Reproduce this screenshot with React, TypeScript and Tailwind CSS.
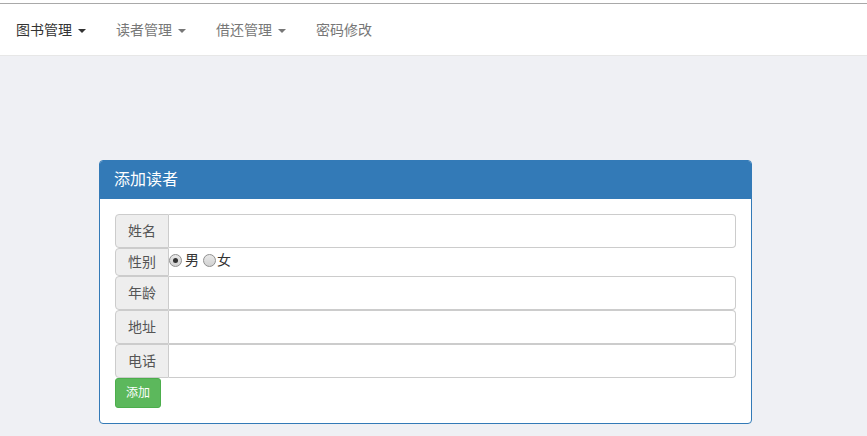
import React from 'react';

const font = { fontFamily: '"Helvetica Neue", "Liberation Sans", "Noto Sans CJK SC", sans-serif' };

function Caret({ dark }: { dark?: boolean }) {
  return (
    <span
      className={`ml-[6px] inline-block h-0 w-0 border-x-[4px] border-t-[4px] border-x-transparent align-middle ${
        dark ? 'border-t-[#333]' : 'border-t-[#777]'
      }`}
    />
  );
}

function Radio({ checked }: { checked?: boolean }) {
  return (
    <span className="inline-flex h-[13px] w-[13px] items-center justify-center rounded-full border border-[#8f8f8f] bg-gradient-to-b from-[#e8e8e8] to-[#d2d2d2]">
      {checked && <span className="h-[5px] w-[5px] rounded-full bg-[#333]" />}
    </span>
  );
}

function Field({ label }: { label: string }) {
  return (
    <div className="flex h-[34px]">
      <span className="flex w-[54px] items-center justify-center rounded-l-[4px] border border-[#ccc] bg-[#eee] text-[14px] text-[#555]">
        {label}
      </span>
      <input
        className="flex-1 rounded-r-[4px] border border-l-0 border-[#ccc] bg-white px-3 text-[14px] outline-none"
        type="text"
      />
    </div>
  );
}

export default function App() {
  const navItems = [
    { label: '图书管理', caret: true, active: true },
    { label: '读者管理', caret: true },
    { label: '借还管理', caret: true },
    { label: '密码修改', caret: false },
  ];

  return (
    <div className="min-h-[436px] bg-[#eff0f4]" style={font}>
      {/* navbar */}
      <div className="bg-white">
        <div className="h-[3px]" />
        <div className="h-px bg-[#a9a9a9]" />
        <nav className="flex h-[52px] items-center border-b border-[#e7e7e7] pl-px pt-[2px]">
          {navItems.map((item) => (
            <a
              key={item.label}
              className={`flex items-center px-[15px] text-[14px] ${item.active ? 'text-[#333]' : 'text-[#777]'}`}
            >
              {item.label}
              {item.caret && <Caret dark={item.active} />}
            </a>
          ))}
        </nav>
      </div>

      {/* panel */}
      <div className="pl-[99px] pt-[104px]">
        <div className="w-[653px] overflow-hidden rounded-[4px] border border-[#337ab7] bg-white">
          <div className="flex h-[38px] items-center bg-[#337ab7] px-[14px] text-[16px] text-white">添加读者</div>
          <div className="flex flex-col p-[15px]">
            <Field label="姓名" />
            <div className="flex h-[28px]">
              <span className="flex w-[54px] items-center justify-center rounded-l-[4px] border border-[#ccc] bg-[#eee] text-[14px] text-[#555]">
                性别
              </span>
              <label className="flex items-center gap-[3px] pb-[4px] text-[14px] text-[#333]">
                <Radio checked />
                男
              </label>
              <label className="ml-[4px] flex items-center gap-[1px] pb-[4px] text-[14px] text-[#333]">
                <Radio />
                女
              </label>
            </div>
            <Field label="年龄" />
            <Field label="地址" />
            <Field label="电话" />
            <div>
              <button className="h-[30px] w-[46px] rounded-[3px] border border-[#4cae4c] bg-[#5cb85c] text-[12px] text-white">
                添加
              </button>
            </div>
          </div>
        </div>
      </div>
    </div>
  );
}
